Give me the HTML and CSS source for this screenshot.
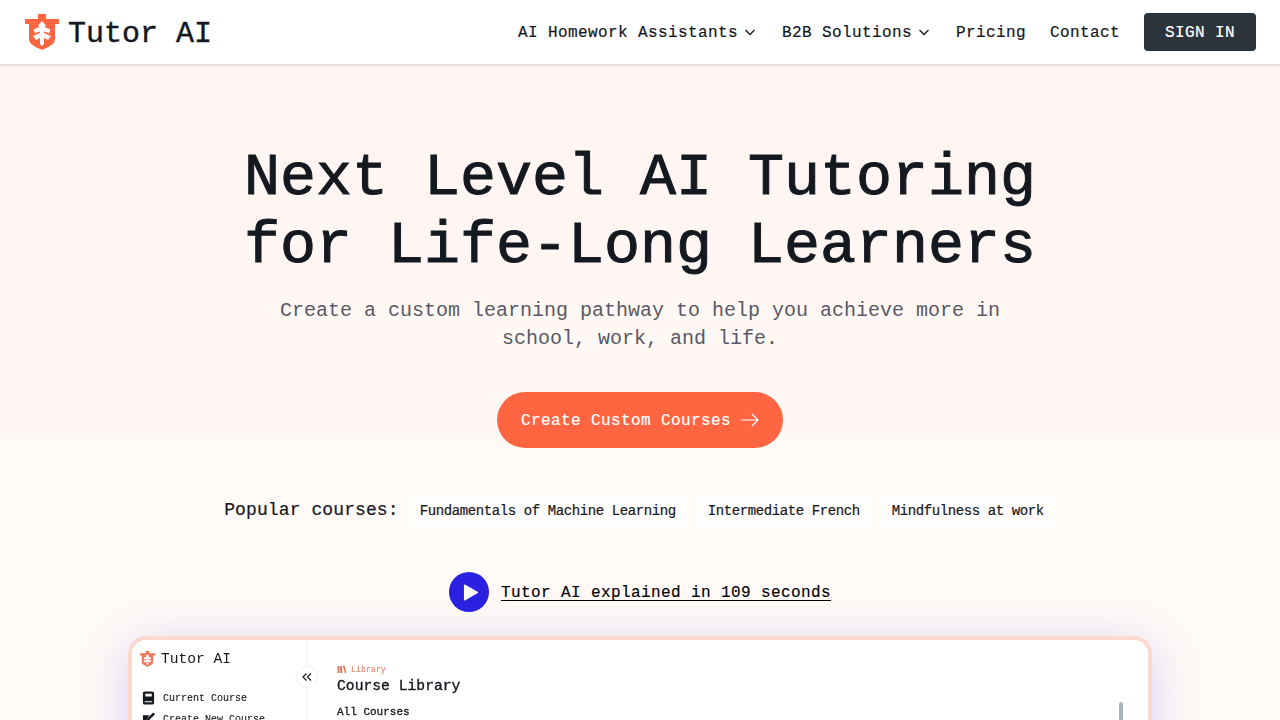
FILE: index.html
```html
<!DOCTYPE html>
<html lang="en">
<head>
  <meta charset="UTF-8" />
  <meta name="viewport" content="width=device-width, initial-scale=1.0" />
  <title>Tutor AI</title>
  <link rel="stylesheet" href="styles.css">
</head>
<body>

<header class="topbar">
  <a href="#" class="brand">
    <svg class="brand-mark" viewBox="0 0 34 36" aria-hidden="true">
      <path fill="#ff6540" d="M13 0h8v5h13v5h-4v15c0 5-6 8-13 11C10 33 4 30 4 25V10H0V5h13z"/>
      <path fill="#fff" d="M17 7l4 4.500-1.500 1.500 6 2.500-1.500 3.500-5-1.500V19l7 3-3 4-4-2v6l-2 2-2-2v-6l-4 2-3-4 7-3v-1.500L10 19l-1.500-3.500 6-2.500-1.500-1.500z"/>
    </svg>
    <span>Tutor AI</span>
  </a>
  <nav class="topnav">
    <a href="#">AI Homework Assistants
      <svg class="chevron" viewBox="0 0 16 16"><path d="M3.500 6l4.500 4.500L12.500 6"/></svg>
    </a>
    <a href="#">B2B Solutions
      <svg class="chevron" viewBox="0 0 16 16"><path d="M3.500 6l4.500 4.500L12.500 6"/></svg>
    </a>
    <a href="#">Pricing</a>
    <a href="#">Contact</a>
    <a href="#" class="signin">SIGN IN</a>
  </nav>
</header>

<main class="hero">
  <h1>Next Level AI Tutoring<br>for Life-Long Learners</h1>
  <p class="lead">Create a custom learning pathway to help you achieve more in school, work, and life.</p>

  <a href="#" class="cta">
    <span class="cta-text">Create Custom Courses</span>
    <svg class="cta-arrow" viewBox="0 0 18 14"><path d="M0 7h17M11 1l6 6-6 6"/></svg>
  </a>

  <div class="popular">
    <span class="popular-label">Popular courses:</span>
    <a href="#" class="chip">Fundamentals of Machine Learning</a>
    <a href="#" class="chip">Intermediate French</a>
    <a href="#" class="chip">Mindfulness at work</a>
  </div>

  <a href="#" class="explainer">
    <span class="play"><svg viewBox="0 0 16 18"><path d="M1 1.500v15a1 1 0 0 0 1.500 .8l13-7.500a1 1 0 0 0 0-1.600l-13-7.500A1 1 0 0 0 1 1.500z"/></svg></span>
    <span class="explainer-text">Tutor AI explained in 109 seconds</span>
  </a>

  <div class="preview">
    <aside class="preview-side">
      <div class="preview-brand">
        <svg class="preview-mark" viewBox="0 0 34 36" aria-hidden="true">
          <path fill="#f0785a" d="M13 0h8v5h13v5h-4v15c0 5-6 8-13 11C10 33 4 30 4 25V10H0V5h13z"/>
          <path fill="#fff" d="M17 7l4 4.500-1.500 1.500 6 2.500-1.500 3.500-5-1.500V19l7 3-3 4-4-2v6l-2 2-2-2v-6l-4 2-3-4 7-3v-1.500L10 19l-1.500-3.500 6-2.500-1.500-1.500z"/>
        </svg>
        <span>Tutor AI</span>
      </div>
      <div class="preview-item">
        <svg viewBox="0 0 14 14"><path fill="#15181c" d="M3 0h8a2 2 0 0 1 2 2v10a2 2 0 0 1-2 2H3a2 2 0 0 1-2-2V2a2 2 0 0 1 2-2z"/><path fill="#fff" d="M3.500 2.500h7v3h-7zM3 10.500h8v1H3z"/></svg>
        Current Course
      </div>
      <div class="preview-item">
        <svg viewBox="0 0 14 14"><path fill="#15181c" d="M1 3h7L5 7v4h4l3-3v5H1z"/><path fill="#15181c" d="M12 0l2 2-7 7H5V7z"/></svg>
        Create New Course
      </div>
      <span class="collapse">
        <svg viewBox="0 0 10 10"><path d="M4.500 1.500L1 5l3.500 3.500M9 1.500L5.500 5 9 8.500"/></svg>
      </span>
    </aside>
    <section class="preview-main">
      <div class="crumb">
        <svg viewBox="0 0 10 10"><path fill="#e0785f" d="M0 1h2.200v8H0zM3 1h2.200v8H3zM6 1l1.800-.5L10 8.500 8.200 9z"/></svg>
        Library
      </div>
      <h2>Course Library</h2>
      <h3>All Courses</h3>
      <span class="preview-scroll"></span>
    </section>
  </div>
</main>

</body>
</html>
```

FILE: styles.css
```css
* {
  box-sizing: border-box;
}
html, body {
  height: 720px;
  overflow: hidden;
}
body {
  font-family: 'Liberation Mono', 'DejaVu Sans Mono', monospace;
  background: linear-gradient(180deg, #fff4f1 0%, #fff6f3 30%, #fffaf7 70%, #fffaf6 100%);
  color: #14181f;
  margin: 0;
}
a {
  color: inherit;
  text-decoration: none;
}

/* top bar */
.topbar {
  height: 64px;
  background-color: #fff;
  box-shadow: 0 1px 3px rgba(60, 30, 20, 0.18);
  display: flex;
  align-items: center;
  justify-content: space-between;
  padding: 0 24px 0 25px;
  position: relative;
}
.brand {
  display: flex;
  align-items: center;
  gap: 9px;
  font-size: 30px;
  -webkit-text-stroke: 0.4px #14181f;
}
.brand span {
  padding-top: 4px;
}
.brand-mark {
  width: 34px;
  height: 36px;
}
.topnav {
  display: flex;
  align-items: center;
  gap: 24px;
  font-size: 16px;
  letter-spacing: 0.4px;
  -webkit-text-stroke: 0.2px #14181f;
}
.topnav a {
  display: flex;
  align-items: center;
  gap: 4px;
  padding-top: 2px;
}
.chevron {
  width: 16px;
  height: 16px;
  margin-top: -2px;
  fill: none;
  stroke: #14181f;
  stroke-width: 1.3;
}
.topnav .signin {
  height: 38px;
  width: 112px;
  justify-content: center;
  background-color: #2d333b;
  color: #fff;
  border-radius: 4px;
  -webkit-text-stroke: 0.2px #fff;
}

/* hero */
.hero {
  display: flex;
  flex-direction: column;
  align-items: center;
  padding-top: 80px;
}
.hero h1 {
  margin: 0;
  font-size: 60px;
  font-weight: normal;
  line-height: 68px;
  text-align: center;
  -webkit-text-stroke: 1px #14181f;
}
.lead {
  width: 740px;
  margin: 17px 0 0;
  font-size: 20px;
  line-height: 28px;
  text-align: center;
  color: #575a66;
}
.cta {
  display: flex;
  align-items: center;
  gap: 10px;
  height: 56px;
  margin-top: 39px;
  padding: 0 24px;
  border-radius: 28px;
  background-color: #ff6540;
  color: #fff;
  font-size: 16px;
  letter-spacing: 0.4px;
  -webkit-text-stroke: 0.2px #fff;
}
.cta-text {
  padding-top: 2px;
}
.cta-arrow {
  width: 18px;
  height: 14px;
  fill: none;
  stroke: #fff;
  stroke-width: 1.2;
}
.popular {
  display: flex;
  align-items: center;
  gap: 8px;
  margin-top: 42px;
}
.popular-label {
  font-size: 18px;
  letter-spacing: 0.1px;
  margin-right: 1px;
  -webkit-text-stroke: 0.2px #14181f;
}
.chip {
  height: 40px;
  padding: 2px 12px 0;
  display: flex;
  align-items: center;
  background-color: rgba(255, 255, 255, 0.6);
  border-radius: 6px;
  font-size: 14px;
  letter-spacing: -0.4px;
  -webkit-text-stroke: 0.2px #14181f;
}
.explainer {
  display: flex;
  align-items: center;
  gap: 12px;
  margin-top: 42px;
  font-size: 16px;
  letter-spacing: 0.4px;
  -webkit-text-stroke: 0.15px #000;
  color: #000;
}
.explainer-text {
  padding-top: 2px;
  text-decoration: underline;
  text-underline-offset: 3px;
}
.play {
  width: 40px;
  height: 40px;
  border-radius: 50%;
  background-color: #2a22e0;
  display: flex;
  align-items: center;
  justify-content: center;
  padding-left: 3px;
}
.play svg {
  width: 15px;
  height: 17px;
  fill: #fff;
}

/* app screenshot */
.preview {
  display: flex;
  flex-shrink: 0;
  width: 1024px;
  height: 400px;
  margin-top: 24px;
  background-color: #fff;
  border: 4px solid #ffd8ce;
  border-radius: 18px;
  box-shadow: 0 10px 50px rgba(110, 80, 255, 0.26);
  filter: blur(0.3px);
}
.preview-side {
  width: 175px;
  position: relative;
  padding: 10px 0 0 8px;
  border-right: 1px solid #f4f2f1;
}
.preview-brand {
  display: flex;
  align-items: center;
  gap: 6px;
  font-size: 14.6px;
  height: 18px;
  margin-bottom: 20px;
}
.preview-mark {
  width: 15px;
  height: 16px;
}
.preview-item {
  display: flex;
  align-items: center;
  gap: 8px;
  height: 21px;
  padding-left: 2px;
  font-size: 10px;
  -webkit-text-stroke: 0.1px #14181f;
}
.preview-item svg {
  width: 13px;
  height: 14px;
  margin-top: -2px;
}
.collapse {
  position: absolute;
  right: -11px;
  top: 27px;
  width: 20px;
  height: 20px;
  border-radius: 50%;
  background-color: #fff;
  box-shadow: 0 0 3px rgba(0, 0, 0, 0.12);
  display: flex;
  align-items: center;
  justify-content: center;
}
.collapse svg {
  width: 10px;
  height: 10px;
  fill: none;
  stroke: #222;
  stroke-width: 1.3;
}
.preview-main {
  flex: 1;
  position: relative;
  padding: 24px 0 0 30px;
}
.crumb {
  display: flex;
  align-items: center;
  gap: 4px;
  font-size: 8.3px;
  color: #e0856e;
  height: 10px;
  -webkit-text-stroke: 0.1px #e0856e;
}
.crumb svg {
  width: 10px;
  height: 9px;
}
.preview-main h2 {
  margin: 1px 0 0;
  font-size: 14.7px;
  line-height: 22px;
  font-weight: normal;
  -webkit-text-stroke: 0.35px #14181f;
}
.preview-main h3 {
  margin: 8px 0 0;
  font-size: 11px;
  line-height: 14px;
  font-weight: normal;
  -webkit-text-stroke: 0.3px #14181f;
}
.preview-scroll {
  position: absolute;
  top: 62px;
  right: 25px;
  width: 4px;
  height: 60px;
  border-radius: 2px;
  background-color: #a9b5bd;
}
```
